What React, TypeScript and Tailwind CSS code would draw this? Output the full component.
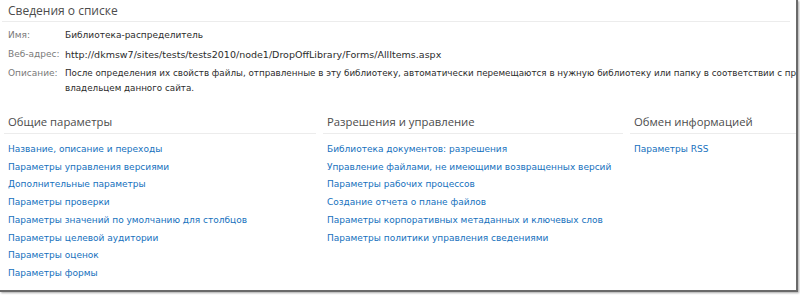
const general = [
  "Название, описание и переходы",
  "Параметры управления версиями",
  "Дополнительные параметры",
  "Параметры проверки",
  "Параметры значений по умолчанию для столбцов",
  "Параметры целевой аудитории",
  "Параметры оценок",
  "Параметры формы",
];

const permissions = [
  "Библиотека документов: разрешения",
  "Управление файлами, не имеющими возвращенных версий",
  "Параметры рабочих процессов",
  "Создание отчета о плане файлов",
  "Параметры корпоративных метаданных и ключевых слов",
  "Параметры политики управления сведениями",
];

const sharing = ["Параметры RSS"];

const body = "font-['DejaVu_Sans',Verdana,sans-serif] text-[9px]";
const heading = "font-['Open_Sans',sans-serif] text-[#4c4c4c]";

function Section({ title, links }: { title: string; links: string[] }) {
  return (
    <div className="flex flex-col">
      <div className={`${heading} text-[11.3px] border-b border-[#ececec] px-1 h-[23px] leading-[22px]`}>{title}</div>
      <ul className="px-1 pt-[7px]">
        {links.map((l) => (
          <li key={l} className={`${body} leading-[17.7px] text-[#1570bd] whitespace-nowrap`}>
            {l}
          </li>
        ))}
      </ul>
    </div>
  );
}

export default function App() {
  return (
    <div className="w-[800px] h-[295px] bg-white">
      <div className="w-[798px] h-[292px] border-r-2 border-b-2 border-[#6a6a6a] shadow-[1px_1px_2px_rgba(0,0,0,0.35)] overflow-hidden">
        <div className="pl-[2px] pr-[6px]">
          <div className={`${heading} text-[12px] border-b border-[#ececec] pl-[6px] h-[22px] leading-[21px]`}>
            Сведения о списке
          </div>
        </div>

        <div className={`${body} pl-2 pt-[6px] flex flex-col gap-[4px] whitespace-nowrap`}>
          <div className="flex leading-[15px]">
            <span className="w-[57px] text-[#7a7a7a]">Имя:</span>
            <span className="text-[#2b2b2b]">Библиотека-распределитель</span>
          </div>
          <div className="flex leading-[15px]">
            <span className="w-[57px] text-[#7a7a7a]">Веб-адрес:</span>
            <span className="text-[#2b2b2b] text-[9.5px]">http://dkmsw7/sites/tests/tests2010/node1/DropOffLibrary/Forms/AllItems.aspx</span>
          </div>
          <div className="flex leading-[15px]">
            <span className="w-[57px] shrink-0 text-[#7a7a7a]">Описание:</span>
            <span className="text-[#2b2b2b] text-[8.75px]">
              После определения их свойств файлы, отправленные в эту библиотеку, автоматически перемещаются в нужную библиотеку или папку в соответствии с правилами, установленными
              <br />
              владельцем данного сайта.
            </span>
          </div>
        </div>

        <div className="grid grid-cols-[312px_300px_1fr] gap-[7px] pl-1 pt-[15px]">
          <Section title="Общие параметры" links={general} />
          <Section title="Разрешения и управление" links={permissions} />
          <Section title="Обмен информацией" links={sharing} />
        </div>
      </div>
    </div>
  );
}
